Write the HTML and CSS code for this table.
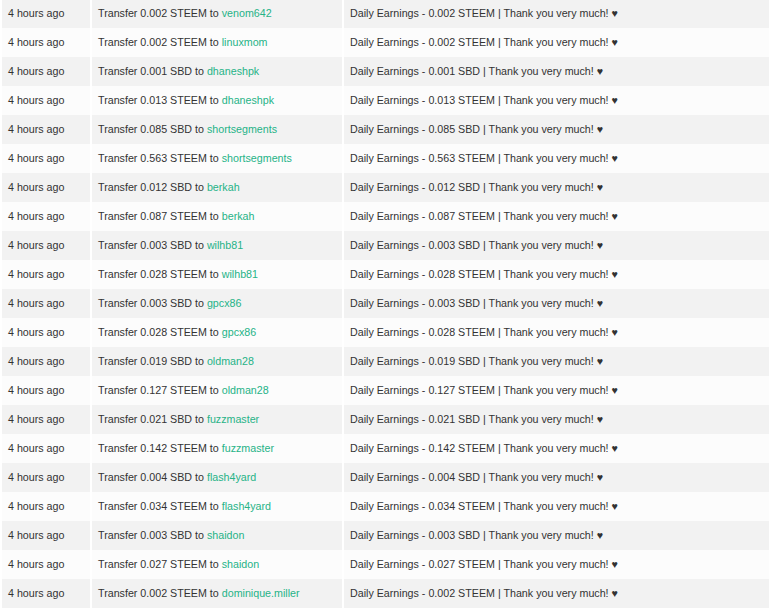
FILE: index.html
```html
<!DOCTYPE html>
<html>
<head>
<meta charset="utf-8">
<link rel="stylesheet" href="styles.css">
</head>
<body>
<table class="tx">
<tbody>
<tr><td class="t">4 hours ago</td><td class="d">Transfer 0.002 STEEM to <a>venom642</a></td><td class="m">Daily Earnings - 0.002 STEEM | Thank you very much! ♥</td></tr>
<tr><td class="t">4 hours ago</td><td class="d">Transfer 0.002 STEEM to <a>linuxmom</a></td><td class="m">Daily Earnings - 0.002 STEEM | Thank you very much! ♥</td></tr>
<tr><td class="t">4 hours ago</td><td class="d">Transfer 0.001 SBD to <a>dhaneshpk</a></td><td class="m">Daily Earnings - 0.001 SBD | Thank you very much! ♥</td></tr>
<tr><td class="t">4 hours ago</td><td class="d">Transfer 0.013 STEEM to <a>dhaneshpk</a></td><td class="m">Daily Earnings - 0.013 STEEM | Thank you very much! ♥</td></tr>
<tr><td class="t">4 hours ago</td><td class="d">Transfer 0.085 SBD to <a>shortsegments</a></td><td class="m">Daily Earnings - 0.085 SBD | Thank you very much! ♥</td></tr>
<tr><td class="t">4 hours ago</td><td class="d">Transfer 0.563 STEEM to <a>shortsegments</a></td><td class="m">Daily Earnings - 0.563 STEEM | Thank you very much! ♥</td></tr>
<tr><td class="t">4 hours ago</td><td class="d">Transfer 0.012 SBD to <a>berkah</a></td><td class="m">Daily Earnings - 0.012 SBD | Thank you very much! ♥</td></tr>
<tr><td class="t">4 hours ago</td><td class="d">Transfer 0.087 STEEM to <a>berkah</a></td><td class="m">Daily Earnings - 0.087 STEEM | Thank you very much! ♥</td></tr>
<tr><td class="t">4 hours ago</td><td class="d">Transfer 0.003 SBD to <a>wilhb81</a></td><td class="m">Daily Earnings - 0.003 SBD | Thank you very much! ♥</td></tr>
<tr><td class="t">4 hours ago</td><td class="d">Transfer 0.028 STEEM to <a>wilhb81</a></td><td class="m">Daily Earnings - 0.028 STEEM | Thank you very much! ♥</td></tr>
<tr><td class="t">4 hours ago</td><td class="d">Transfer 0.003 SBD to <a>gpcx86</a></td><td class="m">Daily Earnings - 0.003 SBD | Thank you very much! ♥</td></tr>
<tr><td class="t">4 hours ago</td><td class="d">Transfer 0.028 STEEM to <a>gpcx86</a></td><td class="m">Daily Earnings - 0.028 STEEM | Thank you very much! ♥</td></tr>
<tr><td class="t">4 hours ago</td><td class="d">Transfer 0.019 SBD to <a>oldman28</a></td><td class="m">Daily Earnings - 0.019 SBD | Thank you very much! ♥</td></tr>
<tr><td class="t">4 hours ago</td><td class="d">Transfer 0.127 STEEM to <a>oldman28</a></td><td class="m">Daily Earnings - 0.127 STEEM | Thank you very much! ♥</td></tr>
<tr><td class="t">4 hours ago</td><td class="d">Transfer 0.021 SBD to <a>fuzzmaster</a></td><td class="m">Daily Earnings - 0.021 SBD | Thank you very much! ♥</td></tr>
<tr><td class="t">4 hours ago</td><td class="d">Transfer 0.142 STEEM to <a>fuzzmaster</a></td><td class="m">Daily Earnings - 0.142 STEEM | Thank you very much! ♥</td></tr>
<tr><td class="t">4 hours ago</td><td class="d">Transfer 0.004 SBD to <a>flash4yard</a></td><td class="m">Daily Earnings - 0.004 SBD | Thank you very much! ♥</td></tr>
<tr><td class="t">4 hours ago</td><td class="d">Transfer 0.034 STEEM to <a>flash4yard</a></td><td class="m">Daily Earnings - 0.034 STEEM | Thank you very much! ♥</td></tr>
<tr><td class="t">4 hours ago</td><td class="d">Transfer 0.003 SBD to <a>shaidon</a></td><td class="m">Daily Earnings - 0.003 SBD | Thank you very much! ♥</td></tr>
<tr><td class="t">4 hours ago</td><td class="d">Transfer 0.027 STEEM to <a>shaidon</a></td><td class="m">Daily Earnings - 0.027 STEEM | Thank you very much! ♥</td></tr>
<tr><td class="t">4 hours ago</td><td class="d">Transfer 0.002 STEEM to <a>dominique.miller</a></td><td class="m">Daily Earnings - 0.002 STEEM | Thank you very much! ♥</td></tr>
</tbody>
</table>
</body>
</html>
```

FILE: styles.css
```css
html, body {
  margin: 0;
  padding: 0;
  background: #ffffff;
}
body {
  font-family: "Liberation Sans", Arial, sans-serif;
  font-size: 10.7px;
  color: #333333;
}
.tx {
  border-collapse: collapse;
  margin: -1px 0 0 0;
  width: 769px;
  table-layout: fixed;
}
.tx td {
  height: 29px;
  box-sizing: border-box;
  padding: 0 0 2px 6px;
  vertical-align: middle;
  border-left: 2px solid #ffffff;
  white-space: nowrap;
  line-height: 14px;
}
.tx tr:nth-child(odd) td { background: #f2f2f2; }
.tx tr:nth-child(even) td { background: #fcfcfc; }
.tx td.t { width: 90px; }
.tx td.d { width: 252px; }
.tx td.m { padding-left: 6px; }
.tx a {
  color: #26b387;
  text-decoration: none;
}
```
